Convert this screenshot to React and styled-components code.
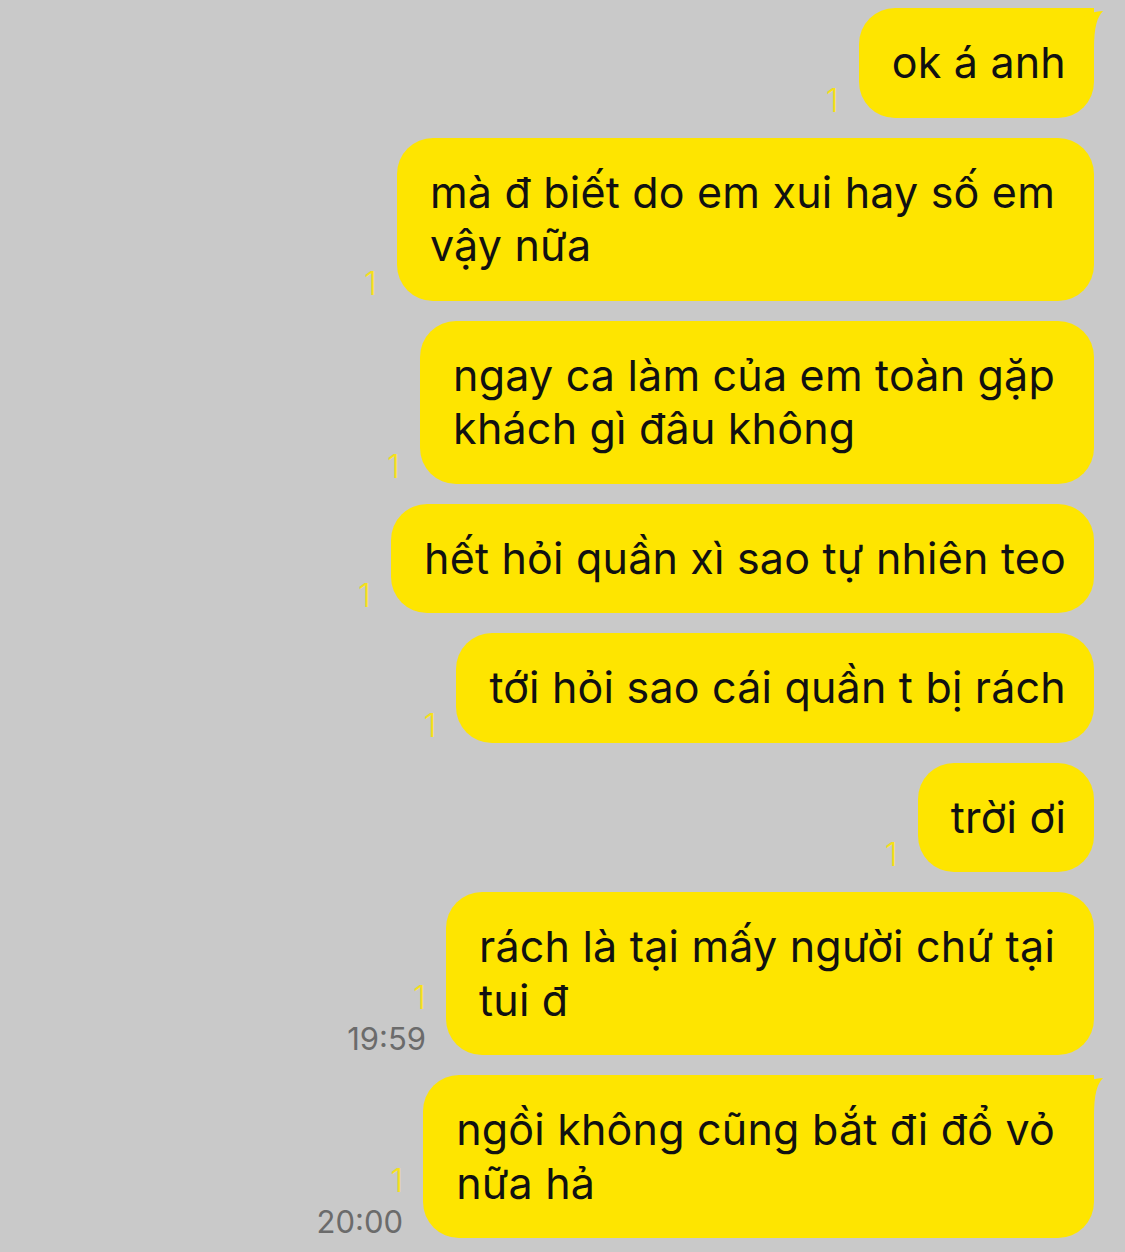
import React from 'react';
import styled, { createGlobalStyle } from 'styled-components';

const messages = [
  { id: 1, lines: ['ok á anh'], tail: true },
  { id: 2, lines: ['mà đ biết do em xui hay số em', 'vậy nữa'] },
  { id: 3, lines: ['ngay ca làm của em toàn gặp', 'khách gì đâu không'] },
  { id: 4, lines: ['hết hỏi quần xì sao tự nhiên teo'] },
  { id: 5, lines: ['tới hỏi sao cái quần t bị rách'] },
  { id: 6, lines: ['trời ơi'] },
  { id: 7, lines: ['rách là tại mấy người chứ tại', 'tui đ'], time: '19:59' },
  { id: 8, lines: ['ngồi không cũng bắt đi đổ vỏ', 'nữa hả'], time: '20:00', tail: true },
];

export default function App() {
  return (
    <>
      <GlobalStyle />
      <ChatList>
        {messages.map(msg => (
          <MessageRow key={msg.id}>
            <Meta>
              <ReadCount>1</ReadCount>
              {msg.time && <Time>{msg.time}</Time>}
            </Meta>
            <Bubble $tail={msg.tail} $wrapped={msg.lines.length > 1}>
              {msg.tail && <Tail />}
              <BubbleText>
                {msg.lines.map((line, i) => (
                  <React.Fragment key={i}>
                    {i > 0 && <br />}
                    {line}
                  </React.Fragment>
                ))}
              </BubbleText>
            </Bubble>
          </MessageRow>
        ))}
      </ChatList>
    </>
  );
}

const Tail = () => (
  <TailSvg viewBox="-40 0 50 40" width="50" height="40">
    <path
      d="M -40 0 L -22 0 C -16 0, -13 4, -11 9 C -5 5, 2 3, 9 3 C 3 9, 0 20, 0 40 L -40 40 Z"
      fill="#FEE500"
    />
  </TailSvg>
);

const GlobalStyle = createGlobalStyle`
  html, body {
    margin: 0;
    padding: 0;
    background: #c9c9c9;
  }
  body {
    font-family: Inter, "Noto Sans", sans-serif;
    -webkit-font-smoothing: antialiased;
  }
`;

const ChatList = styled.div`
  display: flex;
  flex-direction: column;
  align-items: flex-end;
  gap: 20px;
  padding: 8px 31px 16px 0;
  min-height: 1228px;
  box-sizing: border-box;
`;

const MessageRow = styled.div`
  display: flex;
  flex-direction: row;
  align-items: flex-end;
  gap: 20px;
`;

const Meta = styled.div`
  display: flex;
  flex-direction: column;
  align-items: flex-end;
  gap: 9px;
  padding-bottom: 1px;
`;

const ReadCount = styled.span`
  font-size: 33px;
  font-weight: 300;
  line-height: 1;
  color: #f5e01a;
`;

const Time = styled.span`
  font-size: 31px;
  line-height: 1;
  color: #6b6b6b;
`;

const Bubble = styled.div`
  position: relative;
  background: #fee500;
  border-radius: 36px;
  border-top-right-radius: ${props => (props.$tail ? '0' : '36px')};
  padding: 28px ${props => (props.$wrapped ? '39px' : '28px')} 28px 33px;
`;

const TailSvg = styled.svg`
  position: absolute;
  top: 0;
  right: -10px;
  display: block;
`;

const BubbleText = styled.p`
  position: relative;
  margin: 0;
  font-size: 43px;
  letter-spacing: 0.2px;
  line-height: 53.5px;
  color: #111;
  white-space: nowrap;
`;
